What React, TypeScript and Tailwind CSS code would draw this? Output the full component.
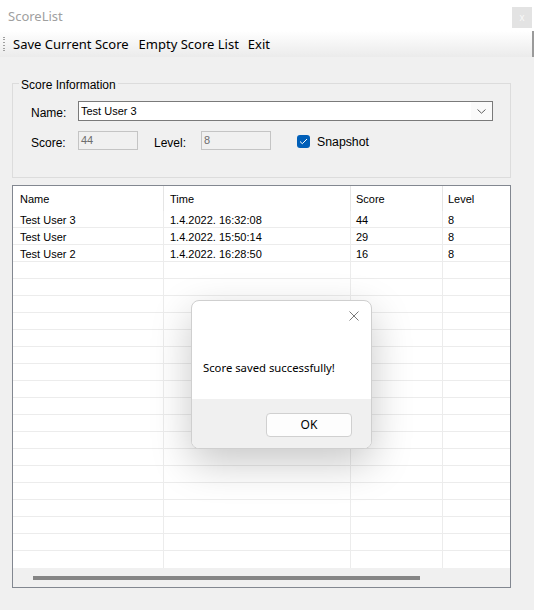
import React from "react";

const rows = [
  { name: "Test User 3", time: "1.4.2022. 16:32:08", score: "44", level: "8" },
  { name: "Test User", time: "1.4.2022. 15:50:14", score: "29", level: "8" },
  { name: "Test User 2", time: "1.4.2022. 16:28:50", score: "16", level: "8" },
];

const emptyRows = Array.from({ length: 18 });

function Row({ cells, last }: { cells: string[]; last?: boolean }) {
  return (
    <div className={`flex h-[17px] shrink-0 ${last ? "" : "border-b border-[#ececec]"}`}>
      <div className="w-[151px] shrink-0 border-r border-[#ececec] pl-[7px] leading-[18px]">{cells[0]}</div>
      <div className="w-[187px] shrink-0 border-r border-[#ececec] pl-[6px] leading-[18px]">{cells[1]}</div>
      <div className="w-[92px] shrink-0 border-r border-[#ececec] pl-[5px] leading-[18px]">{cells[2]}</div>
      <div className="flex-1 pl-[5px] leading-[18px]">{cells[3]}</div>
    </div>
  );
}

export default function App() {
  return (
    <div
      className="relative w-[534px] h-[610px] overflow-hidden bg-[#f0f0f0] text-black"
      style={{ fontFamily: '"Liberation Sans", Arial, sans-serif' }}
    >
      {/* Title bar */}
      <div className="flex h-[31px] items-start bg-white">
        <div
          className="pl-[8px] pt-[7px] text-[13px] leading-[18px] text-[#a0a0a0]"
          style={{ fontFamily: '"Noto Sans", sans-serif' }}
        >
          ScoreList
        </div>
        <div className="ml-auto mr-[2px] mt-[7px] flex h-[21px] w-[20px] items-center justify-center bg-[#e3e3e3] text-[10px] leading-none text-[#f8f8f8]">
          x
        </div>
      </div>

      {/* Menu bar */}
      <div
        className="flex h-[26px] items-center bg-gradient-to-b from-white to-[#ebebeb] border-r-2 border-[#9a9a9a] text-[13px]"
        style={{ fontFamily: '"Noto Sans", sans-serif' }}
      >
        <div className="ml-[3px] flex h-[15px] w-[2px] flex-col justify-between">
          <div className="h-[1px] w-[2px] bg-[#a0a0a0]" />
          <div className="h-[1px] w-[2px] bg-[#a0a0a0]" />
          <div className="h-[1px] w-[2px] bg-[#a0a0a0]" />
          <div className="h-[1px] w-[2px] bg-[#a0a0a0]" />
          <div className="h-[1px] w-[2px] bg-[#a0a0a0]" />
          <div className="h-[1px] w-[2px] bg-[#a0a0a0]" />
        </div>
        <div className="ml-[8px] leading-[20px]">Save Current Score</div>
        <div className="ml-[10px] leading-[20px]">Empty Score List</div>
        <div className="ml-[9px] leading-[20px]">Exit</div>
      </div>

      {/* Group box */}
      <div className="px-[12px] pt-[26px]">
        <div className="relative h-[95px] w-[499px] border border-[#dcdcdc]">
          <div className="absolute left-[6px] top-[-6px] bg-[#f0f0f0] px-[2px] text-[12px] leading-[14px]">
            Score Information
          </div>
          <div className="flex flex-col pl-[18px] pt-[17px] text-[12px]">
            <div className="flex h-[20px] items-center">
              <div className="w-[47px] pt-[3px]">Name:</div>
              <div className="flex h-[20px] w-[415px] items-center border border-[#7a7a7a] bg-white">
                <div className="flex-1 pl-[2px] text-[11px]">Test User 3</div>
                <div className="flex h-full w-[21px] items-center justify-center bg-[#fafafa]">
                  <svg width="9" height="5" viewBox="0 0 9 5">
                    <polyline points="0.5,0.5 4.5,4.2 8.5,0.5" fill="none" stroke="#606060" strokeWidth="1" />
                  </svg>
                </div>
              </div>
            </div>
            <div className="mt-[10px] flex h-[19px] items-center">
              <div className="w-[47px] pt-[4px]">Score:</div>
              <div className="flex h-[19px] w-[60px] items-center border border-[#c4c4c4] pl-[2px] text-[11px] text-[#6d6d6d]">
                44
              </div>
              <div className="ml-[16px] w-[47px] pt-[4px]">Level:</div>
              <div className="flex h-[19px] w-[70px] items-center border border-[#c4c4c4] pl-[2px] text-[11px] text-[#6d6d6d]">
                8
              </div>
              <div className="ml-[26px] mt-[1px] flex h-[13px] w-[13px] items-center justify-center rounded-[3px] bg-[#005fb8]">
                <svg width="9" height="7" viewBox="0 0 9 7">
                  <polyline points="1,3.5 3.3,5.7 8,1" fill="none" stroke="white" strokeWidth="1" />
                </svg>
              </div>
              <div className="ml-[7px] pt-[3px] text-[12.3px]">Snapshot</div>
            </div>
          </div>
        </div>
      </div>

      {/* List view */}
      <div className="px-[12px] pt-[7px]">
        <div className="flex h-[403px] w-[499px] flex-col border border-[#828790] bg-white text-[11px]">
          <div className="flex h-[25px] shrink-0 items-center">
            <div className="h-full w-[151px] shrink-0 border-r border-[#e5e5e5] pl-[7px] leading-[26px]">Name</div>
            <div className="h-full w-[187px] shrink-0 border-r border-[#e5e5e5] pl-[6px] leading-[26px]">Time</div>
            <div className="h-full w-[92px] shrink-0 border-r border-[#e5e5e5] pl-[5px] leading-[26px]">Score</div>
            <div className="h-full flex-1 pl-[5px] leading-[26px]">Level</div>
          </div>
          {rows.map((r, i) => (
            <Row key={i} cells={[r.name, r.time, r.score, r.level]} />
          ))}
          {emptyRows.map((_, i) => (
            <Row key={"e" + i} cells={["", "", "", ""]} last={i === emptyRows.length - 1} />
          ))}
          <div className="flex flex-1 items-center bg-[#f0f0f0] pl-[20px]">
            <div className="h-[4px] w-[387px] bg-[#858585]" />
          </div>
        </div>
      </div>

      {/* Message box */}
      <div
        className="absolute left-[191px] top-[300px] flex h-[149px] w-[181px] flex-col overflow-hidden rounded-[8px] border border-[#cfcfcf] bg-white shadow-[0_14px_40px_rgba(0,0,0,0.22)]"
        style={{ fontFamily: '"Noto Sans", sans-serif' }}
      >
        <div className="flex h-[98px] flex-col">
          <div className="flex justify-end pr-[12px] pt-[10px]">
            <svg width="10" height="10" viewBox="0 0 10 10">
              <path d="M0.5 0.5 L9.5 9.5 M9.5 0.5 L0.5 9.5" stroke="#7a7a7a" strokeWidth="1" />
            </svg>
          </div>
          <div className="pl-[11px] pt-[39px] text-[11.3px] leading-[16px]">Score saved successfully!</div>
        </div>
        <div className="flex flex-1 items-start justify-end bg-[#f0f0f0] pr-[19px] pt-[14px]">
          <div className="flex h-[24px] w-[86px] items-center justify-center rounded-[4px] border border-[#d0d0d0] bg-[#fdfdfd] text-[12px]">
            OK
          </div>
        </div>
      </div>
    </div>
  );
}
